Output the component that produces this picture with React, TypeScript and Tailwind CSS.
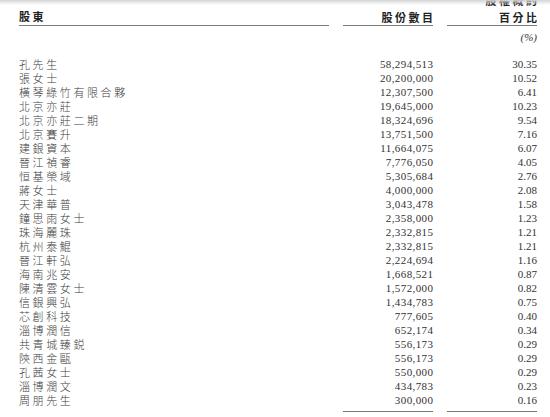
import React from "react";

const rows: [string, string, string][] = [
  ["孔先生", "58,294,513", "30.35"],
  ["張女士", "20,200,000", "10.52"],
  ["橫琴綠竹有限合夥", "12,307,500", "6.41"],
  ["北京亦莊", "19,645,000", "10.23"],
  ["北京亦莊二期", "18,324,696", "9.54"],
  ["北京賽升", "13,751,500", "7.16"],
  ["建銀資本", "11,664,075", "6.07"],
  ["晉江禎睿", "7,776,050", "4.05"],
  ["恒基榮域", "5,305,684", "2.76"],
  ["蔣女士", "4,000,000", "2.08"],
  ["天津華普", "3,043,478", "1.58"],
  ["鐘思雨女士", "2,358,000", "1.23"],
  ["珠海麗珠", "2,332,815", "1.21"],
  ["杭州泰鯤", "2,332,815", "1.21"],
  ["晉江軒弘", "2,224,694", "1.16"],
  ["海南兆安", "1,668,521", "0.87"],
  ["陳清雲女士", "1,572,000", "0.82"],
  ["信銀興弘", "1,434,783", "0.75"],
  ["芯創科技", "777,605", "0.40"],
  ["淄博潤信", "652,174", "0.34"],
  ["共青城臻鋭", "556,173", "0.29"],
  ["陝西金甌", "556,173", "0.29"],
  ["孔茜女士", "550,000", "0.29"],
  ["淄博潤文", "434,783", "0.23"],
  ["周朋先生", "300,000", "0.16"],
];

const cjk = { fontFamily: '"Noto Sans CJK TC", "Noto Sans", sans-serif' };
const serif = { fontFamily: '"Liberation Serif", "Times New Roman", serif' };

export default function App() {
  return (
    <div className="relative w-[550px] h-[417px] overflow-hidden bg-white text-[#333]">
      <div className="mt-[-6px] pl-[19px] grid grid-cols-[310px_90px_90px] gap-x-[14px]">
        {/* header row A */}
        <div />
        <div />
        <div className="h-[13px] leading-[13px] text-right text-[11px] font-bold tracking-[2.5px] mr-[-2.5px] text-[#222]" style={cjk}>
          股權概約
        </div>
        {/* header row B */}
        <div className="h-[19px] border-b border-[#7a7a7a] flex items-end pb-[2px]">
          <span className="text-[11px] leading-[14px] font-bold tracking-[2.5px] text-[#222]" style={cjk}>股東</span>
        </div>
        <div className="h-[19px] border-b border-[#7a7a7a] flex items-end justify-end pb-[1px]">
          <span className="text-[11px] leading-[14px] font-bold tracking-[2.5px] mr-[-2.5px] text-[#222]" style={cjk}>股份數目</span>
        </div>
        <div className="h-[19px] border-b border-[#7a7a7a] flex items-end justify-end pb-[1px]">
          <span className="text-[11px] leading-[14px] font-bold tracking-[2.5px] mr-[-2.5px] text-[#222]" style={cjk}>百分比</span>
        </div>
        {/* (%) row */}
        <div />
        <div />
        <div className="mt-[4px] mb-[13px] text-right text-[11px] leading-[14px] italic" style={serif}>(%)</div>
        {rows.map(([n, a, p], i) => (
          <React.Fragment key={i}>
            <div className="text-[11px] leading-[14px] h-[14px] tracking-[2.6px] whitespace-nowrap font-light text-[#3c3c3c]" style={cjk}>{n}</div>
            <div className="text-[11px] leading-[14px] h-[14px] text-right tracking-[0.4px] mr-[-0.4px]" style={serif}>{a}</div>
            <div className="text-[11px] leading-[14px] h-[14px] text-right" style={serif}>{p}</div>
          </React.Fragment>
        ))}
        <div />
        <div className="mt-[4px] border-t border-[#7a7a7a]" />
        <div className="mt-[4px] border-t border-[#7a7a7a]" />
      </div>
      <div className="absolute top-0 left-0 right-0 h-[5px] bg-gradient-to-b from-[#d4d4d4] to-transparent" />
    </div>
  );
}
